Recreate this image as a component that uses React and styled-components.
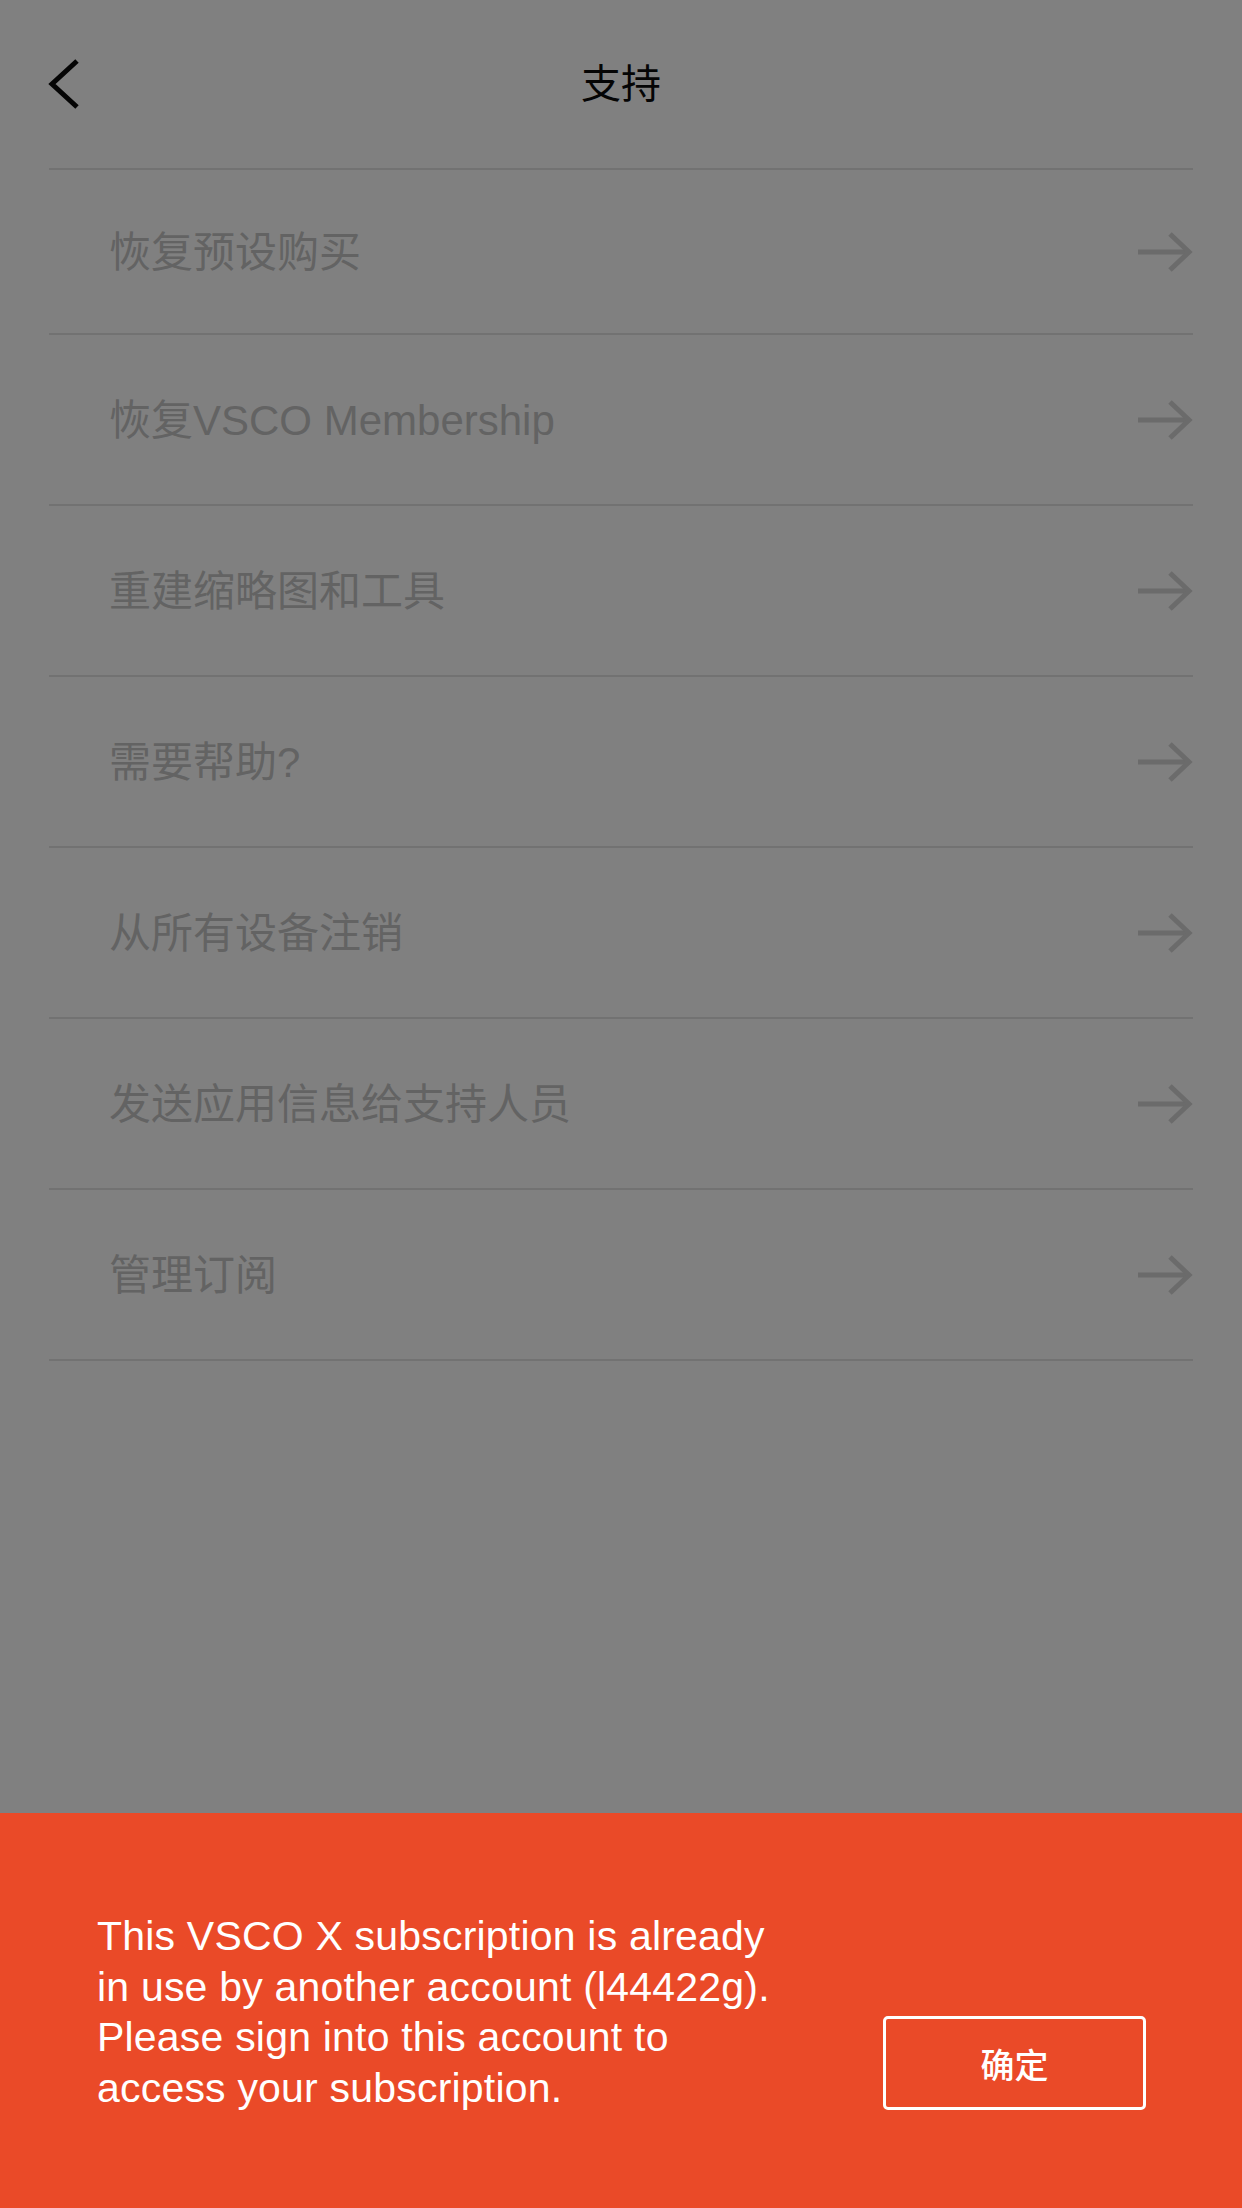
import React from 'react';
import styled, {createGlobalStyle} from 'styled-components';

const GlobalStyle = createGlobalStyle`
  body {
    margin: 0;
    background: #808080;
    font-family: "Liberation Sans", "Noto Sans CJK SC", sans-serif;
  }
`;

const Page = styled.div`
  display: flex;
  flex-direction: column;
  height: 2208px;
  background: #808080;
`;

const Header = styled.header`
  display: grid;
  grid-template-columns: 1fr auto 1fr;
  align-items: center;
  height: 168px;
`;

const BackButton = styled.button`
  justify-self: start;
  display: flex;
  padding: 0 0 0 48px;
  border: none;
  background: none;
`;

const Title = styled.h1`
  margin: 0 0 6px;
  font-family: "Noto Sans CJK SC", sans-serif;
  font-size: 40px;
  font-weight: 400;
  color: #050505;
`;

const List = styled.ul`
  list-style: none;
  margin: 0 49px;
  padding: 0;
  border-top: 2px solid #727272;
`;

const Row = styled.li`
  box-sizing: border-box;
  display: flex;
  align-items: center;
  justify-content: space-between;
  height: 171px;
  padding-left: 60px;
  border-bottom: 2px solid #727272;

  &:first-child {
    height: 165px;
  }
`;

const Label = styled.span`
  padding-bottom: 6px;
  font-family: "Liberation Sans", "Noto Sans CJK SC", sans-serif;
  font-size: 42px;
  color: #636363;
`;

const Spacer = styled.div`
  flex: 1;
`;

const Banner = styled.div`
  box-sizing: border-box;
  display: flex;
  align-items: flex-end;
  justify-content: space-between;
  height: 395px;
  padding: 96px 96px 97px 97px;
  background: #ea4a28;
`;

const Message = styled.p`
  margin: 0 0 -2px;
  font-family: "Liberation Sans", sans-serif;
  font-size: 41px;
  line-height: 50.5px;
  letter-spacing: 0.2px;
  color: #fff;
`;

const OkButton = styled.button`
  box-sizing: border-box;
  width: 263px;
  height: 94px;
  margin-bottom: 1px;
  border: 3px solid #fff;
  border-radius: 5px;
  background: transparent;
  color: #fff;
  font-family: "Noto Sans CJK SC", sans-serif;
  font-size: 34px;
  font-weight: 500;
`;

const items = [
    '恢复预设购买',
    '恢复VSCO Membership',
    '重建缩略图和工具',
    '需要帮助?',
    '从所有设备注销',
    '发送应用信息给支持人员',
    '管理订阅',
];

const Arrow = () => (
    <svg width="56" height="40" viewBox="0 0 56 40" fill="none" stroke="#6b6b6b" strokeWidth="5">
        <line x1="1" y1="20" x2="52" y2="20"/>
        <polyline points="33,2 52,20 33,38"/>
    </svg>
);

const App = () => {
    return (
        <Page>
            <GlobalStyle/>
            <Header>
                <BackButton aria-label="返回">
                    <svg width="34" height="52" viewBox="0 0 34 52" fill="none" stroke="#050505" strokeWidth="5">
                        <polyline points="29,3 4,26 29,49"/>
                    </svg>
                </BackButton>
                <Title>支持</Title>
            </Header>
            <List>
                {items.map(item => (
                    <Row key={item}>
                        <Label>{item}</Label>
                        <Arrow/>
                    </Row>
                ))}
            </List>
            <Spacer/>
            <Banner>
                <Message>
                    This VSCO X subscription is already<br/>
                    in use by another account (l44422g).<br/>
                    Please sign into this account to<br/>
                    access your subscription.
                </Message>
                <OkButton>确定</OkButton>
            </Banner>
        </Page>
    );
};

export default App;
